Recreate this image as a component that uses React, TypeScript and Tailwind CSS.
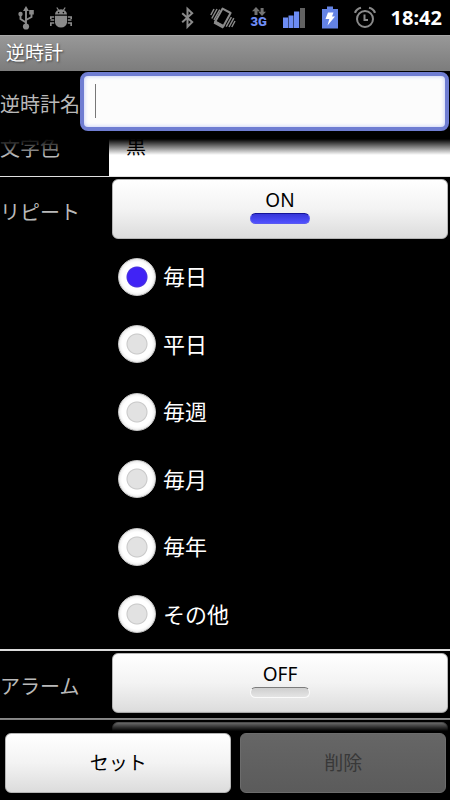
import { useLayoutEffect, useRef, useState } from 'react';
import type { ReactNode } from 'react';
import clsx from 'clsx';

const REPEAT_OPTIONS = ['毎日', '平日', '毎週', '毎月', '毎年', 'その他'];

function UsbIcon() {
  return (
    <svg className="w-4 h-6" viewBox="0 0 16 24" fill="none" stroke="#8a8a8a" strokeWidth="1.9">
      <path d="M8 4v16M8 16.5L2.5 13V9M8 14l5.5-3V7" />
      <path d="M8 0l3 5H5z" fill="#8a8a8a" stroke="none" />
      <circle cx="8" cy="20.5" r="3.1" fill="#8a8a8a" stroke="none" />
      <circle cx="2.5" cy="8" r="2.2" fill="#8a8a8a" stroke="none" />
      <path d="M11.2 4h4.6v4.6h-4.6z" fill="#8a8a8a" stroke="none" />
    </svg>
  );
}

function DebugIcon() {
  return (
    <svg className="w-[22px] h-6" viewBox="0 0 22 24" fill="none" stroke="#8a8a8a" strokeWidth="1.3">
      <path d="M6.8 1.5l2 3M15.2 1.5l-2 3" />
      <path d="M5 8.6a6 5.4 0 0 1 12 0z" fill="#8a8a8a" stroke="none" />
      <path d="M5 9.8h12v6.4a6 5.2 0 0 1-12 0z" fill="#8a8a8a" stroke="none" />
      <path d="M4.2 11H.8v2M4.2 14H.5M4.2 17H.8v3M17.8 11h3.4v2M17.8 14h3.7M17.8 17h3.4v3" strokeWidth="1.7" />
      <circle cx="8.6" cy="6.6" r=".8" fill="#000" stroke="none" />
      <circle cx="13.4" cy="6.6" r=".8" fill="#000" stroke="none" />
    </svg>
  );
}

function BluetoothIcon() {
  return (
    <svg className="w-3.5 h-6" viewBox="0 0 14 24" fill="none" stroke="#8a8a8a" strokeWidth="2">
      <path d="M1.2 7.2l10 8.8-4.7 4.8V2.8l4.7 4.5-10 9" />
    </svg>
  );
}

function VibrateIcon() {
  return (
    <svg className="w-[26px] h-6" viewBox="0 0 26 24" fill="none" stroke="#8a8a8a">
      <path d="M12.6 2.6l8 4.4-7.4 13.4-8.2-4.4z" strokeWidth="2" strokeLinejoin="round" />
      <path d="M5 14.2l9.6 5.2-1.8 3.2-9.2-5z" fill="#8a8a8a" stroke="none" />
      <path d="M.8 9L4 3M1.8 12.5L7 3M4 13.8L9.8 3.6M16.2 20.6l5.2-9.4M19 21l4.8-8.8M21.8 21l3.2-6" strokeWidth="1.5" />
    </svg>
  );
}

function MobileDataIcon() {
  return (
    <div className="w-4 flex flex-col items-center">
      <svg className="w-4 h-[9px]" viewBox="0 0 16 9" fill="#727272">
        <path d="M5 0l4 4.2H6.5V8h-3V4.2H1zM11 9L7.2 4.8h2.4V1h3v3.8H15z" />
      </svg>
      <span className="font-['Roboto',sans-serif] font-black text-[13px] leading-[12px] text-[#6f8df5]">3G</span>
    </div>
  );
}

function SignalIcon() {
  return (
    <svg className="w-6 h-6" viewBox="0 0 24 24" fill="#6c8cf4">
      <path d="M1 11.5h5V22H1zM6.5 9.5h5V22h-5zM12 5.5h5.2V22H12z" />
      <path d="M18 2h5v20h-5z" fill="#626262" />
    </svg>
  );
}

function BatteryIcon() {
  return (
    <svg className="w-[18px] h-6" viewBox="0 0 18 24">
      <path d="M6 .5h6V3h5v19.5H1V3h5z" fill="#6483e4" />
      <path d="M7 6.5h5.5l-1.5 4h3L6.5 19.5l1.8-6.5H4.5z" fill="#fff" />
    </svg>
  );
}

function AlarmIcon() {
  return (
    <svg className="w-[22px] h-6" viewBox="0 0 22 24" fill="none" stroke="#8a8a8a" strokeWidth="2">
      <circle cx="11" cy="13" r="8" />
      <path d="M10.5 8.5V14H14" />
      <path d="M1 6.8C2 4.3 4 2.5 7 1.8M21 6.8C20 4.3 18 2.5 15 1.8" strokeWidth="2.2" />
    </svg>
  );
}

function StatusBar() {
  return (
    <div className="flex items-center h-[35px] pl-[18px] pr-2 bg-black shrink-0">
      <div className="flex items-center gap-4">
        <UsbIcon />
        <DebugIcon />
      </div>
      <div className="ml-auto flex items-center gap-[15px]">
        <BluetoothIcon />
        <VibrateIcon />
        <MobileDataIcon />
        <SignalIcon />
        <BatteryIcon />
        <AlarmIcon />
        <time className="font-['Noto_Sans',sans-serif] font-bold text-xl">18:42</time>
      </div>
    </div>
  );
}

const buttonFace =
  'rounded-md border border-[#b4b4b4] bg-linear-to-b from-white via-[#f3f3f3] to-[#dcdcdc] text-black text-[19px]';

interface ToggleButtonProps {
  label: string;
  on: boolean;
  onChange: (on: boolean) => void;
}

function ToggleButton({ label, on, onChange }: ToggleButtonProps) {
  return (
    <button
      type="button"
      aria-label={label}
      aria-pressed={on}
      onClick={() => onChange(!on)}
      className={clsx(buttonFace, 'w-full h-[60px] flex flex-col items-center pt-2 gap-px')}
    >
      <span className="leading-6">{on ? 'ON' : 'OFF'}</span>
      <span
        className={clsx(
          'w-[60px] h-[11px] rounded-full border',
          on
            ? 'border-[#5a5af0] border-t-[#14149a] bg-linear-to-b from-[#3636d8] to-[#5151ff]'
            : 'border-[#fafafa] border-t-[#7c7c7c] bg-linear-to-b from-[#cfcfcf] to-[#e4e4e4]',
        )}
      />
    </button>
  );
}

function Row({ label, children, className }: { label: string; children: ReactNode; className?: string }) {
  return (
    <div className={clsx('flex border-b-2 border-[#dcdcdc] pt-0.5', className)}>
      <div className="w-[109px] shrink-0 h-[65px] pt-0.5 flex items-center text-xl text-[#b9b9b9]">{label}</div>
      <div className="flex-1 min-w-0 pl-[3px] pr-0.5">{children}</div>
    </div>
  );
}

export default function App() {
  const [name, setName] = useState('');
  const [repeat, setRepeat] = useState(true);
  const [cycle, setCycle] = useState('毎日');
  const [alarm, setAlarm] = useState(false);
  const listRef = useRef<HTMLDivElement>(null);

  useLayoutEffect(() => {
    if (listRef.current) listRef.current.scrollTop = 30;
  }, []);

  return (
    <div className="h-screen flex flex-col bg-black text-white font-['Noto_Sans','Noto_Sans_CJK_JP',sans-serif]">
      <StatusBar />
      <h1 className="h-9 shrink-0 px-1.5 flex items-center text-[19px] leading-none bg-linear-to-b from-[#989898] to-[#7c7c7c] border-t border-[#a8a8a8] [text-shadow:1px_1px_2px_#444]">
        逆時計
      </h1>

      <div className="flex shrink-0 h-[68px] pt-px">
        <label htmlFor="name" className="w-20 shrink-0 h-16 pt-0.5 flex items-center text-xl text-[#b9b9b9]">
          逆時計名
        </label>
        <div className="relative flex-1 h-[59px] pr-px">
          <input
            id="name"
            value={name}
            onChange={(e) => setName(e.target.value)}
            className="size-full px-4 rounded-lg border-4 border-[#6f7dd2] bg-[#fcfcfc] text-black text-xl caret-transparent outline-none shadow-[inset_0_0_4px_#b9c4f5]"
          />
          {name === '' && <span className="absolute left-[15px] top-3 w-px h-[34px] bg-[#777]" />}
        </div>
      </div>

      <div className="relative flex-1 min-h-0">
        <div ref={listRef} className="h-full overflow-y-auto [scrollbar-width:none]">
          <div className="flex h-[68px] border-b border-[#e0e0e0]">
            <label htmlFor="color" className="w-[109px] shrink-0 flex items-center pt-3 text-xl text-[#b9b9b9]">
              文字色
            </label>
            <select
              id="color"
              className="flex-1 appearance-none bg-white text-black text-xl pl-[17px] pt-2 outline-none"
            >
              <option>黒</option>
              <option>白</option>
            </select>
          </div>

          <Row label="リピート">
            <ToggleButton label="リピート" on={repeat} onChange={setRepeat} />
            <div role="radiogroup" aria-label="リピート" className="grid grid-rows-6 h-[405px] mt-1 pl-1.5 mb-px">
              {REPEAT_OPTIONS.map((option) => (
                <label key={option} className="flex items-center gap-[7px] text-[22px]">
                  <input
                    type="radio"
                    name="cycle"
                    checked={cycle === option}
                    onChange={() => setCycle(option)}
                    className="appearance-none size-[38px] rounded-full border border-[#c8c8c8] bg-[radial-gradient(circle,#e2e2e2_9px,#c8c8c8_10px,#fff_11px,#fff_15px,#e6e6e6_19px)] checked:bg-[radial-gradient(circle,#4023f5_9px,#4a34dd_10px,#fff_11px,#fff_15px,#e6e6e6_19px)]"
                  />
                  {option}
                </label>
              ))}
            </div>
          </Row>

          <Row label="アラーム">
            <ToggleButton label="アラーム" on={alarm} onChange={setAlarm} />
          </Row>

          <Row label="">
            <button type="button" aria-label="アラーム音" className={clsx(buttonFace, 'w-full h-[60px]')} />
          </Row>
        </div>
        {/* fading edges of the list */}
        <div className="absolute inset-x-0 top-0 h-4 bg-linear-to-b from-black to-transparent pointer-events-none" />
        <div className="absolute inset-x-0 bottom-0 h-5 bg-linear-to-t from-black to-transparent pointer-events-none" />
      </div>

      <div className="shrink-0 grid grid-cols-[11fr_10fr] gap-[9px] pl-[5px] pr-1 pt-0.5 pb-[7px]">
        <button type="button" className={clsx(buttonFace, 'h-[60px]')}>
          セット
        </button>
        <button
          type="button"
          disabled
          className="h-[60px] rounded-md border border-[#6c6c6c] bg-linear-to-b from-[#666] to-[#5b5b5b] text-[19px] text-[#383838]"
        >
          削除
        </button>
      </div>
    </div>
  );
}
